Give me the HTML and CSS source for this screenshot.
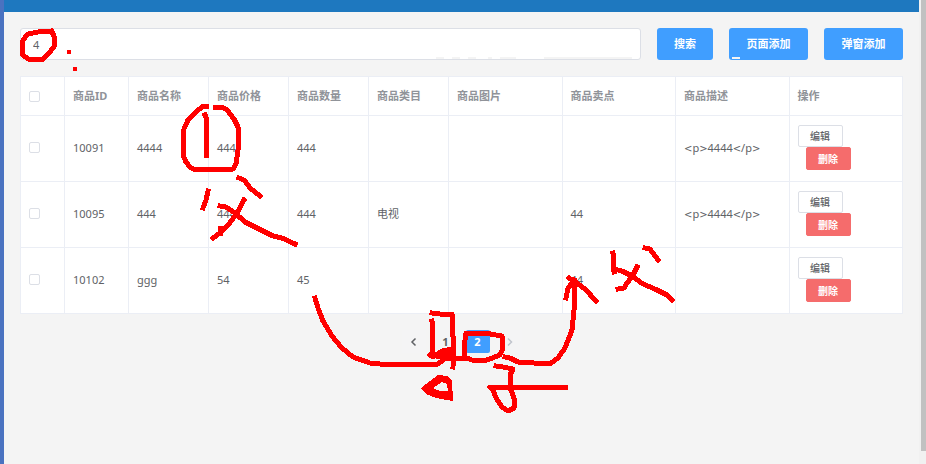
FILE: index.html
```html
<!DOCTYPE html>
<html lang="zh-CN">
<head>
<meta charset="utf-8">
<title>商品列表</title>
<link rel="stylesheet" href="styles.css">
</head>
<body>
<div class="app">
  <aside class="side"></aside>
  <div class="page">
    <header class="topbar"></header>
    <main class="content">
      <form class="toolbar">
        <input class="search" type="text" value="4" aria-label="搜索商品">
        <button class="btn" type="button">搜索</button>
        <button class="btn wide" type="button">页面添加</button>
        <button class="btn wide" type="button">弹窗添加</button>
      </form>
      <table class="goods">
        <colgroup>
          <col class="col-check"><col class="col-id"><col class="col-short"><col class="col-short"><col class="col-short"><col class="col-short"><col><col><col><col>
        </colgroup>
        <thead>
          <tr>
            <th><input type="checkbox" aria-label="全选"></th>
            <th>商品ID</th><th>商品名称</th><th>商品价格</th><th>商品数量</th><th>商品类目</th><th>商品图片</th><th>商品卖点</th><th>商品描述</th><th>操作</th>
          </tr>
        </thead>
        <tbody>
          <tr>
            <td><input type="checkbox" aria-label="选择 10091"></td>
            <td>10091</td><td>4444</td><td>444</td><td>444</td><td></td><td></td><td></td><td><span class="angle">&lt;</span>p<span class="angle">&gt;</span>4444<span class="angle">&lt;</span>/p<span class="angle">&gt;</span></td>
            <td><div class="actions"><button class="mini" type="button">编辑</button><button class="mini danger" type="button">删除</button></div></td>
          </tr>
          <tr>
            <td><input type="checkbox" aria-label="选择 10095"></td>
            <td>10095</td><td>444</td><td>444</td><td>444</td><td>电视</td><td></td><td>44</td><td><span class="angle">&lt;</span>p<span class="angle">&gt;</span>4444<span class="angle">&lt;</span>/p<span class="angle">&gt;</span></td>
            <td><div class="actions"><button class="mini" type="button">编辑</button><button class="mini danger" type="button">删除</button></div></td>
          </tr>
          <tr>
            <td><input type="checkbox" aria-label="选择 10102"></td>
            <td>10102</td><td>ggg</td><td>54</td><td>45</td><td></td><td></td><td>44</td><td></td>
            <td><div class="actions"><button class="mini" type="button">编辑</button><button class="mini danger" type="button">删除</button></div></td>
          </tr>
        </tbody>
      </table>
      <nav class="pager" aria-label="分页">
        <button type="button" aria-label="上一页"><svg width="8" height="10" viewBox="0 0 8 10"><path d="M5.500 1.5 2 5 5.500 8.500"/></svg></button>
        <button type="button">1</button>
        <button type="button" class="current">2</button>
        <button type="button" class="off" aria-label="下一页"><svg width="8" height="10" viewBox="0 0 8 10"><path d="M2 1.5 5.500 5 2 8.5"/></svg></button>
      </nav>
    </main>
  </div>
  <div class="scroll"><div class="thumb"></div></div>
</div>
<svg class="ink" width="926" height="464" viewBox="0 0 926 464" aria-hidden="true">
  <path class="smudge" d="M436 57h8v2h-8zM452 57h8v2h-8zM468 57h8v2h-8zM488 57h4v2h-4zM500 57h16v2h-16zM544 57h88v2h-88z"/>
  <path class="smudge" d="M732 57h8v2h-8z"/>
  <g class="pen">
    <path d="M51 31 38 32 28 34 23 40 22 54 28 59 42 60 49 53 54 47 54 36 52 32"/>
    <path d="M206 106 203 106 195 113 188 120 184 129 183 155 186 162 190 167 193 169 233 169 236 164 238 150 238 127 234 119 227 110 222 107 215 107"/>
    <path d="M205 115 206 117 206 155"/>
    <path d="M208 191 206 200 203 208M239 178 244 180 250 188 260 196M220 206 226 207 235 213 245 222 263 231 273 236 282 238 295 244M244 200 237 213 228 225 220 233 213 238M220 228V233"/>
    <path d="M315 298 318 308 323 321 332 336 342 348 353 357 370 363 380 364 438 364 443 360 451 353"/>
    <path d="M432 313 440 314 452 314 452 330 454 343 453 367M432 321 433 355M430 355 433 357 442 351 452 349M434 356 452 351M438 356H452M447 358H464"/>
    <path d="M488 333 466 333 464 347 464 357 472 360 487 360 500 355 503 348 502 336 490 334"/>
    <path d="M505 357 510 358 518 362 550 364 558 358 565 348 572 330 574 310 574 280M566 298 568 288 574 280M569 278 574 281 585 289 596 301"/>
    <path d="M496 366 503 367 513 369 510 375 510 388 513 395 515 402 514 408 508 411 502 407 496 398 493 390 490 387 565 387"/>
    <path d="M613 253 614 272M614 269 622 271 632 276 643 284 655 289 667 295 672 300M637 267 633 275 627 283 624 288 618 289M645 248 650 249 658 260"/>
  </g>
  <path class="fill" fill-rule="evenodd" d="M421 388 430 381 438 375 447 376 452 380 453 401 436 398 426 394ZM433 388 442 382 447 384 448 391 440 391Z"/>
  <path class="fill" d="M67 50h4v4h-4zM73 67h4v4h-4z"/>
</svg>
</body>
</html>
```
FILE: styles.css
```css
* { box-sizing: border-box; }

body {
  margin: 0;
  background: #f4f4f4;
  color: #606266;
  font: 11px/16px "Noto Sans", "Noto Sans CJK SC", sans-serif;
}

button, input { font: inherit; margin: 0; }

.app { display: flex; min-height: 100vh; }
.side { width: 4px; background: #4a72c0; }
.page { flex: 1; min-width: 0; }
.topbar { height: 12px; background: #1e78bf; }
.content { padding: 16px; }

.toolbar { display: flex; gap: 16px; margin-bottom: 16px; }

.search {
  flex: 1;
  min-width: 0;
  height: 32px;
  padding: 0 12px;
  border: 1px solid #dcdfe6;
  border-radius: 3px;
  background: #fff;
  color: #606266;
}

.btn {
  width: 56px;
  height: 32px;
  padding: 0;
  border: 0;
  border-radius: 3px;
  background: #409eff;
  color: #fff;
  font-weight: 700;
}

.wide { width: 79px; }

.goods {
  width: 100%;
  table-layout: fixed;
  border-collapse: separate;
  border-spacing: 0;
  border: solid #ebeef5;
  border-width: 1px 0 0 1px;
  background: #fff;
}

.col-check { width: 44px; }
.col-id { width: 64px; }
.col-short { width: 80px; }

.goods th, .goods td {
  padding: 0 8px;
  border: solid #ebeef5;
  border-width: 0 1px 1px 0;
  text-align: left;
  vertical-align: middle;
}

.goods th { height: 39px; color: #909399; font-weight: 700; }
.goods td { height: 66px; padding-bottom: 2px; }

.goods input {
  display: block;
  appearance: none;
  width: 11px;
  height: 11px;
  border: 1px solid #dcdfe6;
  border-radius: 2px;
  background: #fff;
}

.angle { font-family: "DejaVu Sans", sans-serif; font-size: 10px; line-height: 1; }

.actions { display: flex; flex-direction: column; align-items: flex-start; }

.mini {
  width: 45px;
  height: 22px;
  padding: 0;
  border: 1px solid #dcdfe6;
  border-radius: 2px;
  background: #fff;
  color: #606266;
  font-size: 10px;
  font-weight: 500;
  line-height: 16px;
}

.danger {
  height: 23px;
  margin-left: 8px;
  border-color: #f56c6c;
  background: #f56c6c;
  color: #fff;
  font-weight: 700;
}

.pager { display: flex; justify-content: center; gap: 8px; margin-top: 16px; }

.pager button {
  display: flex;
  align-items: center;
  justify-content: center;
  width: 24px;
  height: 23px;
  padding: 0;
  border: 0;
  border-radius: 2px;
  background: #f4f4f5;
  color: #606266;
  font-weight: 700;
}

.pager .current { background: #409eff; color: #fff; }
.pager .off { color: #c0c4cc; }
.pager path { fill: none; stroke: currentColor; stroke-width: 1.5; }

.scroll { width: 7px; padding: 0 0 13px 2px; background: #f1f1f1; display: flex; }
.thumb { flex: 1; background: #c1c1c1; }

.ink { position: absolute; top: 0; left: 0; pointer-events: none; }
.pen { fill: none; stroke: #f00; stroke-width: 5; stroke-linecap: square; stroke-linejoin: round; shape-rendering: crispEdges; }
.fill { fill: #f00; shape-rendering: crispEdges; }
.smudge { fill: #f4f4f4; }
```
